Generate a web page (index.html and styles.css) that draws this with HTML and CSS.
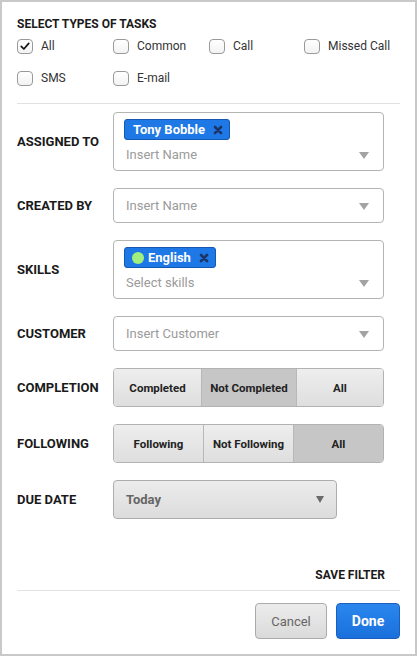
FILE: index.html
```html
<!DOCTYPE html>
<html>
<head>
<meta charset="utf-8">
<link rel="stylesheet" href="styles.css">
</head>
<body>
<div class="panel">
  <div class="section-title">SELECT TYPES OF TASKS</div>
  <div class="types">
    <label class="check"><span class="box checked"><svg viewBox="0 0 16 16" width="12" height="12"><path d="M3 8.5 L6.5 12 L13 4.5" fill="none" stroke="#111" stroke-width="2.2" stroke-linecap="round" stroke-linejoin="round"/></svg></span>All</label>
    <label class="check"><span class="box"></span>Common</label>
    <label class="check"><span class="box"></span>Call</label>
    <label class="check"><span class="box"></span>Missed Call</label>
    <label class="check"><span class="box"></span>SMS</label>
    <label class="check"><span class="box"></span>E-mail</label>
  </div>
  <div class="divider"></div>

  <div class="rows">
    <div class="row">
      <div class="label">ASSIGNED TO</div>
      <div class="field multi">
        <div class="tags"><span class="tag">Tony Bobble<svg class="x" viewBox="0 0 10 10" width="10" height="10"><path d="M2 2 L8 8 M8 2 L2 8" stroke="#1c3566" stroke-width="2.6" stroke-linecap="round"/></svg></span></div>
        <div class="line"><span class="ph">Insert Name</span><span class="arrow"></span></div>
      </div>
    </div>
    <div class="row">
      <div class="label">CREATED BY</div>
      <div class="field single">
        <div class="line"><span class="ph">Insert Name</span><span class="arrow"></span></div>
      </div>
    </div>
    <div class="row">
      <div class="label">SKILLS</div>
      <div class="field multi">
        <div class="tags"><span class="tag"><span class="dot"></span>English<svg class="x" viewBox="0 0 10 10" width="10" height="10"><path d="M2 2 L8 8 M8 2 L2 8" stroke="#1c3566" stroke-width="2.6" stroke-linecap="round"/></svg></span></div>
        <div class="line"><span class="ph">Select skills</span><span class="arrow"></span></div>
      </div>
    </div>
    <div class="row">
      <div class="label">CUSTOMER</div>
      <div class="field single">
        <div class="line"><span class="ph">Insert Customer</span><span class="arrow"></span></div>
      </div>
    </div>
    <div class="row">
      <div class="label">COMPLETION</div>
      <div class="seg seg-completion">
        <div class="opt">Completed</div>
        <div class="opt on">Not Completed</div>
        <div class="opt">All</div>
      </div>
    </div>
    <div class="row">
      <div class="label">FOLLOWING</div>
      <div class="seg seg-following">
        <div class="opt">Following</div>
        <div class="opt">Not Following</div>
        <div class="opt on">All</div>
      </div>
    </div>
    <div class="row">
      <div class="label">DUE DATE</div>
      <div class="select">
        <span>Today</span><span class="arrow dark"></span>
      </div>
    </div>
  </div>

  <div class="save">SAVE FILTER</div>
  <div class="divider"></div>
  <div class="actions">
    <button class="btn cancel">Cancel</button>
    <button class="btn done">Done</button>
  </div>
</div>
</body>
</html>
```

FILE: styles.css
```css
* { box-sizing: border-box; }
html, body { margin: 0; padding: 0; background: #fff; }
body {
  font-family: Roboto, "Liberation Sans", Arial, sans-serif;
  color: #222;
}
.panel {
  width: 417px;
  height: 656px;
  border: 2px solid #c9c9c9;
  padding: 15px 15px 0 15px;
  display: flex;
  flex-direction: column;
}
.section-title {
  font-size: 12px;
  font-weight: 700;
  line-height: 14px;
  color: #1a1a1a;
}
.types {
  margin-top: 7px;
  display: grid;
  grid-template-columns: 96px 96px 95px 1fr;
  row-gap: 16px;
}
.check {
  display: flex;
  align-items: center;
  height: 16px;
  font-size: 12px;
  color: #333;
}
.box {
  width: 16px;
  height: 15px;
  border: 1px solid #9a9a9a;
  border-radius: 4px;
  background: linear-gradient(#fff, #f3f3f3);
  margin-right: 8px;
  display: flex;
  align-items: center;
  justify-content: center;
}
.divider {
  height: 1px;
  background: #e2e2e2;
  margin-top: 17px;
}
.rows {
  margin-top: 8px;
  display: flex;
  flex-direction: column;
  gap: 17px;
}
.row {
  display: flex;
  align-items: center;
}
.label {
  width: 96px;
  font-size: 13px;
  font-weight: 700;
  color: #1a1a1a;
}
.field {
  width: 271px;
  border: 1px solid #b4b4b4;
  border-radius: 4px;
  background: #fff;
  padding: 0 14px 0 12px;
}
.field.multi { height: 59px; padding-top: 6px; }
.field.single { height: 35px; display: flex; align-items: center; }
.field.single .line { width: 100%; }
.tags { display: flex; height: 21px; margin-left: -2px; }
.tag {
  display: inline-flex;
  align-items: center;
  height: 21px;
  background: #1e78e6;
  border: 1px solid #1757b0;
  border-radius: 3px;
  color: #fff;
  font-size: 13px;
  font-weight: 700;
  padding: 0 6px 0 8px;
}
.tag .x { margin-left: 8px; }
.dot {
  width: 12px;
  height: 12px;
  border-radius: 50%;
  background: #a3ef7e;
  margin-right: 4px;
  margin-left: -1px;
}
.line {
  display: flex;
  align-items: center;
  justify-content: space-between;
  margin-top: 7px;
}
.field.single .line { margin-top: 0; }
.ph { font-size: 13px; color: #9b9b9b; }
.arrow {
  width: 0;
  height: 0;
  border-left: 5px solid transparent;
  border-right: 5px solid transparent;
  border-top: 7px solid #a3a3a3;
  margin-top: 2px;
}
.arrow.dark { border-left-width: 4px; border-right-width: 4px; border-top: 7px solid #6a6a6a; margin-top: 0; }
.seg {
  width: 271px;
  height: 39px;
  display: grid;
  border: 1px solid #b2b2b2;
  border-radius: 4px;
  overflow: hidden;
}
.seg-completion { grid-template-columns: 87px 95px 1fr; }
.seg-following { grid-template-columns: 89px 90px 1fr; }
.opt {
  display: flex;
  align-items: center;
  justify-content: center;
  font-size: 11.5px;
  font-weight: 700;
  color: #222;
  background: linear-gradient(#eeeeee, #dedede);
  border-left: 1px solid #b8b8b8;
}
.opt:first-child { border-left: none; }
.opt.on { background: #c6c6c6; }
.select {
  width: 224px;
  height: 39px;
  border: 1px solid #adadad;
  border-radius: 4px;
  background: linear-gradient(#ececec, #dcdcdc);
  display: flex;
  align-items: center;
  justify-content: space-between;
  padding: 0 12px 0 12px;
  font-size: 13px;
  font-weight: 700;
  color: #666;
}
.save {
  margin-top: 49px;
  align-self: flex-end;
  margin-right: 15px;
  font-size: 12px;
  font-weight: 700;
  line-height: 14px;
  color: #1a1a1a;
}
.save + .divider { margin-top: 8px; }
.actions {
  display: flex;
  justify-content: flex-end;
  gap: 9px;
  margin-top: 12px;
}
.btn {
  height: 36px;
  border-radius: 4px;
  font-family: Roboto, "Liberation Sans", Arial, sans-serif;
  font-size: 13px;
  padding: 0;
}
.cancel {
  width: 72px;
  border: 1px solid #ababab;
  background: linear-gradient(#ececec, #dadada);
  color: #666;
}
.done {
  width: 64px;
  border: 1px solid #1a5fbf;
  background: linear-gradient(#2b87ee, #1a70dc);
  color: #fff;
  font-weight: 700;
  font-size: 14px;
}
```
